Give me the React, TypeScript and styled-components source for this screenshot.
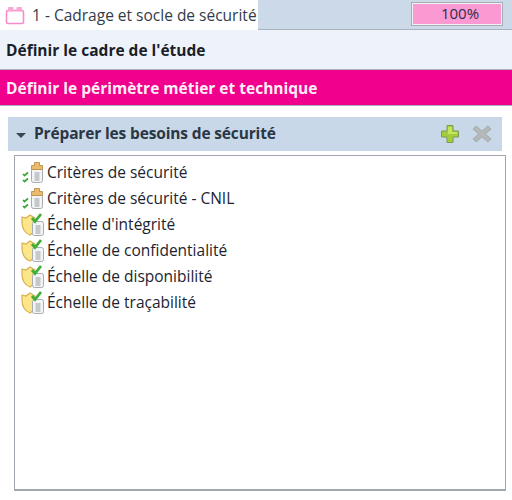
import styled, { createGlobalStyle } from "styled-components";

const GlobalStyle = createGlobalStyle`
  html, body {
    margin: 0;
    padding: 0;
    background: #fff;
  }
  body {
    font-family: "Open Sans", "Noto Sans", "Liberation Sans", sans-serif;
    color: #1c2430;
  }
`;

const Page = styled.div`
  width: 512px;
  height: 500px;
  display: flex;
  flex-direction: column;
  overflow: hidden;
  background: #fff;
`;

const TabBar = styled.div`
  height: 29px;
  flex: none;
  display: flex;
  justify-content: space-between;
  background: #cbd9e8;
  border-bottom: 1px solid #a9b1ba;
  padding-right: 9px;
`;

const Tab = styled.div`
  width: 258px;
  height: 30px;
  display: flex;
  align-items: center;
  gap: 7px;
  padding-left: 5px;
  box-sizing: border-box;
  background: #fff;
  font-size: 15.5px;
  color: #333b4a;
  white-space: nowrap;
`;

const Progress = styled.div`
  width: 92px;
  height: 24px;
  margin-top: 2px;
  box-sizing: border-box;
  border: 1px solid #a8adb3;
  padding: 1px;
  background: #eef2f7;
`;

const ProgressFill = styled.div`
  height: 100%;
  padding-left: 6px;
  box-sizing: border-box;
  background: #fb9ad2;
  font-size: 15px;
  line-height: 19px;
  text-align: center;
  color: #2c2c4a;
`;

const StepRow = styled.div<{ $active?: boolean }>`
  flex: none;
  display: flex;
  align-items: center;
  padding-left: 6px;
  font-size: 15.5px;
  font-weight: 700;
  height: ${({ $active }) => ($active ? "35px" : "39px")};
  background: ${({ $active }) => ($active ? "#f0008c" : "#eef3fb")};
  color: ${({ $active }) => ($active ? "#fff0f8" : "#1a1e28")};
  border-bottom: 1px solid #a9b1ba;
`;

const Section = styled.div`
  flex: 1;
  min-height: 0;
  display: flex;
  flex-direction: column;
  padding: 11px 10px 9px 8px;
`;

const SectionHeader = styled.div`
  height: 34px;
  flex: none;
  display: flex;
  align-items: center;
  padding: 0 10px 0 8px;
  background: #c8d8e8;
  font-size: 15.5px;
  font-weight: 700;
  letter-spacing: -0.15px;
  color: #2a3644;
`;

const Caret = styled.span`
  width: 0;
  height: 0;
  margin: 2px 8px 0 0;
  border-left: 5px solid transparent;
  border-right: 5px solid transparent;
  border-top: 5px solid #3c4650;
`;

const SectionTitle = styled.span`
  flex: 1;
  margin-top: -2px;
`;

const HeaderActions = styled.div`
  display: flex;
  align-items: center;
  gap: 12px;
`;

const TreeBox = styled.div`
  flex: 1;
  margin: 4px -4px 0 6px;
  border: 1px solid #a0a6ad;
  border-bottom: 2px solid #a0a6ad;
  padding: 3px 4px;
  background: #fff;
`;

const TreeItem = styled.div`
  height: 26px;
  display: flex;
  align-items: center;
  font-size: 15.5px;
  color: #1c2430;
`;

const ItemIcon = styled.svg`
  width: 28px;
  height: 24px;
  flex: none;
`;

const CalendarIcon = () => (
  <svg width="20" height="19" viewBox="0 0 20 19">
    <rect x="1.500" y="4.500" width="17" height="13" rx="1.500" fill="#fff" stroke="#f78cc8" strokeWidth="1.600" />
    <rect x="3" y="1" width="5.500" height="4.500" rx="1" fill="#f9a6d6" />
    <rect x="11.500" y="1" width="5.500" height="4.500" rx="1" fill="#f9a6d6" />
  </svg>
);

const PlusIcon = () => (
  <svg width="20" height="20" viewBox="0 0 20 20">
    <path d="M7 1.500h6V7h5.500v6H13v5.500H7V13H1.500V7H7z" fill="#a4cc3c" stroke="#7d9b50" strokeWidth="1" />
    <path d="M8 3h4v5h5v2H8z" fill="#c6e45e" />
  </svg>
);

const CrossIcon = () => (
  <svg width="20" height="20" viewBox="0 0 20 20">
    <path d="M4 2l6 5 6-5 3 3-5.500 5 5.500 5-3 3-6-5-6 5-3-3 5.500-5L1 5z" fill="#b4b8b8" stroke="#a0a4a6" strokeWidth="0.800" />
  </svg>
);

const Jar = ({ x, y }: { x: number; y: number }) => (
  <g transform={`translate(${x} ${y})`}>
    <rect x="0.500" y="0.500" width="11" height="14" rx="2" fill="#f2f4f5" stroke="#a8acae" />
    <rect x="3.500" y="4" width="5" height="9" fill="#c4c9cc" />
  </g>
);

const CriteriaIcon = () => (
  <ItemIcon viewBox="0 0 28 24">
    <path d="M4 14l1.500 1.500L9 12.500M4 20l1.500 1.500L9 18.500" fill="none" stroke="#3aa838" strokeWidth="1.700" />
    <Jar x={12} y={8} />
    <path d="M12.500 9.500V5.500h3V2.500h5v3h3v4z" fill="#e8bc6c" stroke="#b8843a" strokeWidth="0.800" />
  </ItemIcon>
);

const ScaleIcon = () => (
  <ItemIcon viewBox="0 0 28 24">
    <path d="M3 5l4 1 4-3 5 3v13l-5 4c-5-2-8-7-8-13z" fill="#fbe78a" stroke="#d8b050" strokeWidth="1.200" />
    <Jar x={13} y={9} />
    <path d="M13 6l3 3.500 6-7.500" fill="none" stroke="#3fae3a" strokeWidth="2.800" />
  </ItemIcon>
);

const items = [
  { label: "Critères de sécurité", Icon: CriteriaIcon },
  { label: "Critères de sécurité - CNIL", Icon: CriteriaIcon },
  { label: "Échelle d'intégrité", Icon: ScaleIcon },
  { label: "Échelle de confidentialité", Icon: ScaleIcon },
  { label: "Échelle de disponibilité", Icon: ScaleIcon },
  { label: "Échelle de traçabilité", Icon: ScaleIcon },
];

export default function App() {
  return (
    <Page>
      <GlobalStyle />
      <TabBar>
        <Tab>
          <CalendarIcon />
          1 - Cadrage et socle de sécurité
        </Tab>
        <Progress>
          <ProgressFill>100%</ProgressFill>
        </Progress>
      </TabBar>
      <StepRow>Définir le cadre de l'étude</StepRow>
      <StepRow $active>Définir le périmètre métier et technique</StepRow>
      <Section>
        <SectionHeader>
          <Caret />
          <SectionTitle>Préparer les besoins de sécurité</SectionTitle>
          <HeaderActions>
            <PlusIcon />
            <CrossIcon />
          </HeaderActions>
        </SectionHeader>
        <TreeBox>
          {items.map(({ label, Icon }) => (
            <TreeItem key={label}>
              <Icon />
              {label}
            </TreeItem>
          ))}
        </TreeBox>
      </Section>
    </Page>
  );
}
